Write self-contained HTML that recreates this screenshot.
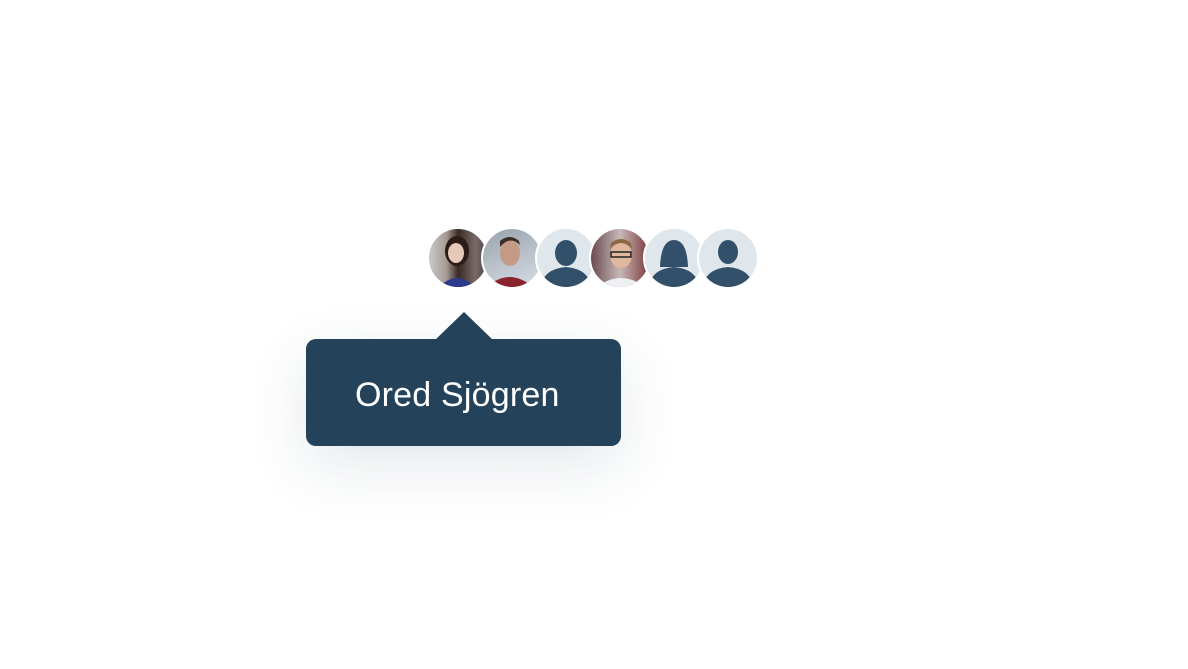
<!DOCTYPE html>
<html><head><style>
html,body{margin:0;padding:0;background:#fff;width:1188px;height:669px;overflow:hidden;font-family:"Liberation Sans",sans-serif}
.av{position:absolute;top:227px;width:58px;height:58px;border-radius:50%;border:2px solid #fff;overflow:hidden;background:#dfe7ed}
.tip{position:absolute;left:306px;top:339px;width:315px;height:107px;background:#24425a;border-radius:10px;box-shadow:0 20px 60px rgba(36,66,90,0.12)}
.arrow{position:absolute;left:435px;top:312px;width:0;height:0;border-left:29px solid transparent;border-right:29px solid transparent;border-bottom:28px solid #24425a}
.txt{position:absolute;left:355px;top:376px;font-size:34px;color:#fff;letter-spacing:0.2px}
</style></head><body>
<div class="av" style="left:427px;background:linear-gradient(90deg,#c9c9c9 0%,#a89a95 30%,#3a2a25 50%,#7a6a66 80%,#445 100%)">
<svg width="58" height="58"><ellipse cx="28" cy="22" rx="12" ry="15" fill="#2a1c18"/><ellipse cx="27" cy="24" rx="8" ry="10" fill="#e6c9b8"/><path d="M10 58 Q28 40 46 58Z" fill="#2b3a8a"/></svg></div>
<div class="av" style="left:481px;background:linear-gradient(160deg,#9aa3ad,#d6dde5)">
<svg width="58" height="58"><ellipse cx="27" cy="24" rx="10" ry="13" fill="#c49a84"/><path d="M17 18 Q27 6 37 16 L36 12 Q27 4 17 12Z" fill="#3a2e26"/><path d="M4 58 Q26 38 50 58Z" fill="#8a2530"/></svg></div>
<div class="av" style="left:535px"><svg width="58" height="58"><ellipse cx="29" cy="24" rx="11" ry="13" fill="#33506a"/><path d="M4 58 Q6 40 29 38 Q52 40 54 58Z" fill="#33506a"/></svg></div>
<div class="av" style="left:589px;background:linear-gradient(90deg,#6a4a50,#c8b8b8 50%,#7a3a3a)">
<svg width="58" height="58"><ellipse cx="30" cy="26" rx="11" ry="13" fill="#e0b8a0"/><path d="M19 20 Q30 8 41 20 L40 14 Q30 6 20 14Z" fill="#8a6a45"/><rect x="20" y="23" width="20" height="5" fill="none" stroke="#222" stroke-width="1.5"/><path d="M6 58 Q30 40 54 58Z" fill="#eef0f4"/></svg></div>
<div class="av" style="left:643px"><svg width="58" height="58"><path d="M15 38 Q16 11 29 11 Q42 11 43 38Z" fill="#33506a"/><path d="M4 58 Q6 40 29 38 Q52 40 54 58Z" fill="#33506a"/></svg></div>
<div class="av" style="left:697px"><svg width="58" height="58"><ellipse cx="29" cy="23" rx="10" ry="12" fill="#33506a"/><path d="M4 58 Q6 40 29 38 Q52 40 54 58Z" fill="#33506a"/></svg></div>
<div class="tip"></div><div class="arrow"></div>
<div class="txt">Ored Sjögren</div>
</body></html>
